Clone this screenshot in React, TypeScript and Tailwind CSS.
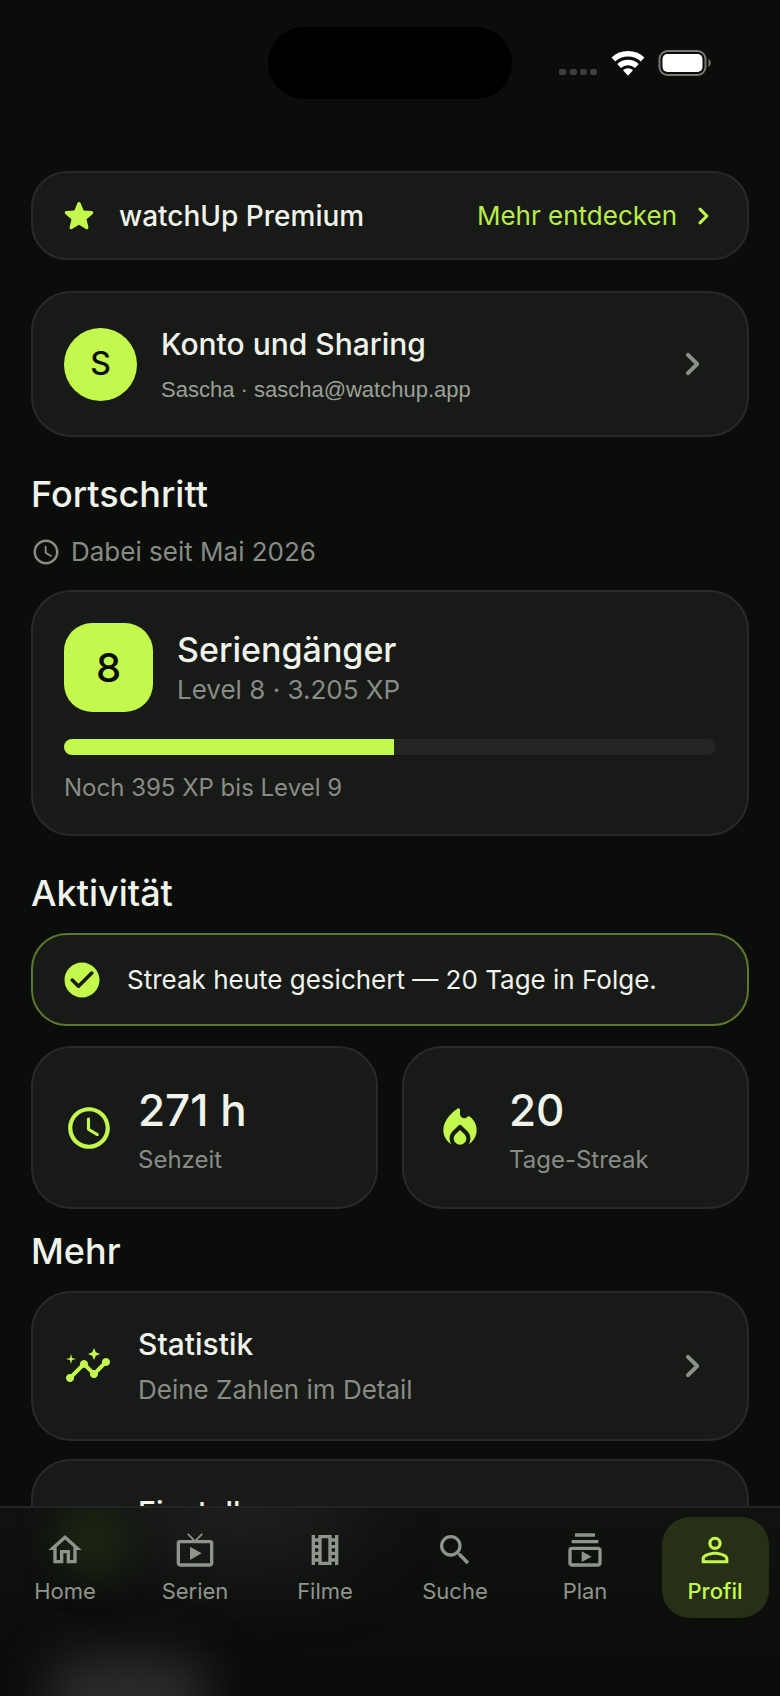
import React from 'react';
import type { IconType } from 'react-icons';
import {
  MdInsights,
  MdLiveTv,
  MdOutlineHome,
  MdOutlineSubscriptions,
  MdOutlineTheaters,
  MdPersonOutline,
  MdSearch,
  MdSettings,
} from 'react-icons/md';

interface NavItem {
  id: string;
  label: string;
  icon: IconType;
}

const navItems: NavItem[] = [
  { id: 'home', label: 'Home', icon: MdOutlineHome },
  { id: 'series', label: 'Serien', icon: MdLiveTv },
  { id: 'movies', label: 'Filme', icon: MdOutlineTheaters },
  { id: 'search', label: 'Suche', icon: MdSearch },
  { id: 'plan', label: 'Plan', icon: MdOutlineSubscriptions },
  { id: 'profile', label: 'Profil', icon: MdPersonOutline },
];

const level = { number: 8, title: 'Seriengänger', xp: '3.205', missing: 395, progress: 50.6 };

interface IconProps {
  className?: string;
}

// Rounded Material shapes, which react-icons only ships with sharp corners
const StarIcon = ({ className }: IconProps) => (
  <svg viewBox="0 0 24 24" fill="currentColor" className={className} aria-hidden="true">
    <path d="M12 17.27l4.15 2.51c.76.46 1.69-.22 1.49-1.08l-1.1-4.72 3.67-3.18c.67-.58.31-1.68-.57-1.75l-4.83-.41-1.89-4.46c-.34-.81-1.5-.81-1.84 0L9.19 8.63l-4.83.41c-.88.07-1.24 1.17-.57 1.75l3.67 3.18-1.1 4.72c-.2.86.73 1.54 1.49 1.08l4.15-2.5z" />
  </svg>
);

const ChevronIcon = ({ className }: IconProps) => (
  <svg viewBox="0 0 24 24" fill="currentColor" className={className} aria-hidden="true">
    <path d="M9.29 15.88L13.17 12 9.29 8.12c-.39-.39-.39-1.02 0-1.41.39-.39 1.02-.39 1.41 0l4.59 4.59c.39.39.39 1.02 0 1.41L10.7 17.3c-.39.39-1.02.39-1.41 0-.38-.39-.39-1.03 0-1.42z" />
  </svg>
);

const CheckCircleIcon = ({ className }: IconProps) => (
  <svg viewBox="0 0 24 24" fill="currentColor" className={className} aria-hidden="true">
    <path d="M12 2C6.48 2 2 6.48 2 12s4.48 10 10 10 10-4.48 10-10S17.52 2 12 2zM9.29 16.29L5.7 12.7c-.39-.39-.39-1.02 0-1.41.39-.39 1.02-.39 1.41 0L10 14.17l6.88-6.88c.39-.39 1.02-.39 1.41 0 .39.39.39 1.02 0 1.41l-7.59 7.59c-.38.39-1.02.39-1.41 0z" />
  </svg>
);

const ClockIcon = ({ className }: IconProps) => (
  <svg viewBox="0 0 24 24" fill="currentColor" className={className} aria-hidden="true">
    <path d="M11.99 2C6.47 2 2 6.48 2 12s4.47 10 9.99 10C17.52 22 22 17.52 22 12S17.52 2 11.99 2zM12 20c-4.42 0-8-3.58-8-8s3.58-8 8-8 8 3.58 8 8-3.58 8-8 8z" />
    <path d="M11.78 7h-.06c-.4 0-.72.32-.72.72v4.72c0 .35.18.68.49.86l4.15 2.49c.34.2.78.1.98-.24.21-.34.1-.79-.25-.99l-3.87-2.3V7.72c0-.4-.32-.72-.72-.72z" />
  </svg>
);

const FlameIcon = ({ className }: IconProps) => (
  <svg viewBox="0 0 24 24" fill="currentColor" className={className} aria-hidden="true">
    <path d="M12 12.9l-2.13 2.09c-.56.56-.87 1.29-.87 2.07C9 18.68 10.35 20 12 20s3-1.32 3-2.94c0-.78-.31-1.52-.87-2.07L12 12.9z" />
    <path d="M12 5.3V3.4c0-.7-.7-1.05-1.25-.68C8.700 4.100 4 7.800 4 13c0 2.920 1.560 5.470 3.890 6.860-.56-.79-.89-1.76-.89-2.8 0-1.32.52-2.56 1.47-3.5l2.830-2.780c.39-.38 1.010-.38 1.400 0l2.830 2.790c.95.93 1.470 2.170 1.470 3.500 0 1.020-.31 1.960-.85 2.750 1.890-1.150 3.290-3.060 3.710-5.300.56-3.040-.62-5.930-2.760-7.720-.46-.38-1.120-.6-1.540-.25C14.380 8.020 12 7.190 12 5.300z" />
  </svg>
);

const StatusBar = () => (
  <header className="grid h-[126px] grid-cols-3 items-center">
    <div className="col-start-2 h-[72px] w-[244px] justify-self-center rounded-full bg-black" />
    <div className="flex items-center justify-end pr-[68px]">
      <svg viewBox="0 0 154 28" className="h-7 w-[154px]" aria-hidden="true">
        <g fill="#3d403c">
          <rect x="1" y="20" width="7" height="6" rx="2" />
          <rect x="12" y="20" width="7" height="6" rx="2" />
          <rect x="22" y="20" width="7" height="6" rx="2" />
          <rect x="32" y="20" width="7" height="6" rx="2" />
        </g>
        <g fill="none" stroke="#fff" strokeWidth="5.5">
          <path d="M55.400 10.500a21.700 21.700 0 0 1 29.200 0" />
          <path d="M61.100 17a13.200 13.200 0 0 1 17.800 0" />
        </g>
        <path d="M70 26.800l-5-5.600a7.500 7.500 0 0 1 10 0z" fill="#fff" />
        <rect x="101.500" y="2" width="46" height="24" rx="8" fill="none" stroke="#777975" strokeWidth="2" />
        <rect x="104.500" y="5" width="40" height="18" rx="5" fill="#fff" />
        <path d="M150.500 10c3 1.500 3 6.500 0 8z" fill="#777975" />
      </svg>
    </div>
  </header>
);

const SectionTitle = ({ children }: { children: React.ReactNode }) => (
  <h2 className="text-4xl leading-[44px] font-medium">{children}</h2>
);

interface StatCardProps {
  icon: React.ComponentType<IconProps>;
  value: string;
  label: string;
}

const StatCard = ({ icon: Icon, value, label }: StatCardProps) => (
  <div className="flex h-[163px] items-center rounded-[40px] border-2 border-[#282a28] bg-[#181a18] pl-[31px]">
    <Icon className="size-[50px] shrink-0 text-[#c3f94c]" />
    <div className="ml-6 pt-1">
      <p className="text-[44px] leading-[56px] font-medium">{value}</p>
      <p className="mt-1 text-2xl leading-9 text-[#888c84]">{label}</p>
    </div>
  </div>
);

interface MenuCardProps {
  icon: IconType;
  title: string;
  subtitle: string;
}

const MenuCard = ({ icon: Icon, title, subtitle }: MenuCardProps) => (
  <button
    type="button"
    className="flex h-[150px] w-full items-center rounded-[40px] border-2 border-[#282a28] bg-[#181a18] px-[31px] text-left"
  >
    <Icon className="size-12 shrink-0 text-[#c3f94c]" />
    <span className="ml-[26px] flex-1">
      <span className="block text-[30px] leading-10 font-medium">{title}</span>
      <span className="mt-2 block text-[26px] leading-9 text-[#888c84]">{subtitle}</span>
    </span>
    <ChevronIcon className="size-12 text-[#8b9088]" />
  </button>
);

const BottomNav = ({ active }: { active: string }) => (
  <nav className="fixed inset-x-0 bottom-0 h-[190px] overflow-hidden border-t-2 border-[#232523] bg-linear-to-b from-[#101210] to-[#0a0c0a]">
    <div className="absolute -top-8 left-[130px] h-20 w-[220px] rounded-full bg-[#202220] blur-2xl" />
    <div className="absolute -top-2 left-[52px] size-20 rounded-full bg-[#1b2312] blur-lg" />
    <div className="absolute -bottom-10 left-[44px] h-20 w-[166px] rounded-full bg-[#2b2d2b] blur-xl" />
    <div className="relative flex justify-between pt-[9px]">
      {navItems.map(({ id, label, icon: Icon }) => (
        <a
          key={id}
          href={`#${id}`}
          aria-current={id === active ? 'page' : undefined}
          className={
            id === active
              ? 'flex flex-1 justify-center text-[#c3f94c]'
              : 'flex flex-1 justify-center text-[#8f958b]'
          }
        >
          <span
            className={
              id === active
                ? 'flex h-[101px] w-[107px] flex-col items-center rounded-[28px] bg-[#272f17] pt-[13px] font-medium'
                : 'flex h-[101px] w-[107px] flex-col items-center pt-[13px]'
            }
          >
            <Icon className="size-10" />
            <span className="mt-[7px] text-[22px] leading-7">{label}</span>
          </span>
        </a>
      ))}
    </div>
  </nav>
);

function App() {
  return (
    <div className="h-screen overflow-hidden bg-[#0b0d0b] font-[Inter,sans-serif] text-[#f0f3ea]">
      <StatusBar />

      <main className="px-[31px] pt-[45px]">
        <button
          type="button"
          className="flex h-[89px] w-full items-center rounded-[36px] border-2 border-[#282a28] bg-[#181a18] px-[26px]"
        >
          <StarIcon className="size-10 text-[#c3f94c]" />
          <span className="ml-5 flex-1 text-left text-[28px] leading-9 font-medium">watchUp Premium</span>
          <span className="text-[26px] leading-9 text-[#b9ec4a]">Mehr entdecken</span>
          <ChevronIcon className="ml-2 size-9 text-[#c3f94c]" />
        </button>

        <button
          type="button"
          className="mt-[31px] flex h-[146px] w-full items-center rounded-[40px] border-2 border-[#282a28] bg-[#181a18] px-[31px] text-left"
        >
          <span className="grid size-[73px] place-items-center rounded-full bg-[#c3f94c] text-[32px] font-medium text-[#0b0d0b]">
            S
          </span>
          <span className="ml-6 flex-1 pt-1">
            <span className="block text-[30px] leading-10 font-medium">Konto und Sharing</span>
            <span className="mt-2 block font-['Liberation_Sans',sans-serif] text-[22px] leading-9 text-[#9ba096]">
              Sascha · sascha@watchup.app
            </span>
          </span>
          <ChevronIcon className="size-12 text-[#8b9088]" />
        </button>

        <section className="mt-[35px]">
          <SectionTitle>Fortschritt</SectionTitle>
          <p className="mt-[18px] flex items-center gap-[10px] text-[26px] leading-9 text-[#888c84]">
            <ClockIcon className="size-[30px]" />
            Dabei seit Mai 2026
          </p>
          <div className="mt-5 rounded-[40px] border-2 border-[#282a28] bg-[#181a18] px-[31px] pt-[31px] pb-7">
            <div className="flex items-center">
              <span className="grid size-[89px] place-items-center rounded-[28px] bg-[#c3f94c] text-[40px] font-medium text-[#0b0d0b]">
                {level.number}
              </span>
              <div className="ml-6">
                <h3 className="text-[34px] leading-[44px] font-medium">{level.title}</h3>
                <p className="text-[26px] leading-9 text-[#888c84]">
                  Level {level.number} · {level.xp} XP
                </p>
              </div>
            </div>
            <div className="mt-[27px] h-4 overflow-hidden rounded-full bg-[#232523]">
              <div className="h-full bg-[#c3f94c]" style={{ width: `${level.progress}%` }} />
            </div>
            <p className="mt-[15px] text-2xl leading-9 text-[#888c84]">
              Noch {level.missing} XP bis Level {level.number + 1}
            </p>
          </div>
        </section>

        <section className="mt-[35px]">
          <SectionTitle>Aktivität</SectionTitle>
          <div className="mt-[18px] flex h-[93px] items-center rounded-[36px] border-2 border-[#5c7a2a] bg-[#181a18] pl-7">
            <CheckCircleIcon className="size-[42px] text-[#c3f94c]" />
            <p className="ml-6 text-[26px] leading-9">Streak heute gesichert — 20 Tage in Folge.</p>
          </div>
          <div className="mt-5 grid grid-cols-2 gap-6">
            <StatCard icon={ClockIcon} value="271 h" label="Sehzeit" />
            <StatCard icon={FlameIcon} value="20" label="Tage-Streak" />
          </div>
        </section>

        <section className="mt-5">
          <SectionTitle>Mehr</SectionTitle>
          <div className="mt-[18px] flex flex-col gap-[18px]">
            <MenuCard icon={MdInsights} title="Statistik" subtitle="Deine Zahlen im Detail" />
            <MenuCard icon={MdSettings} title="Einstellungen" subtitle="App und Benachrichtigungen" />
          </div>
        </section>
      </main>

      <BottomNav active="profile" />
    </div>
  );
}

export default App;
